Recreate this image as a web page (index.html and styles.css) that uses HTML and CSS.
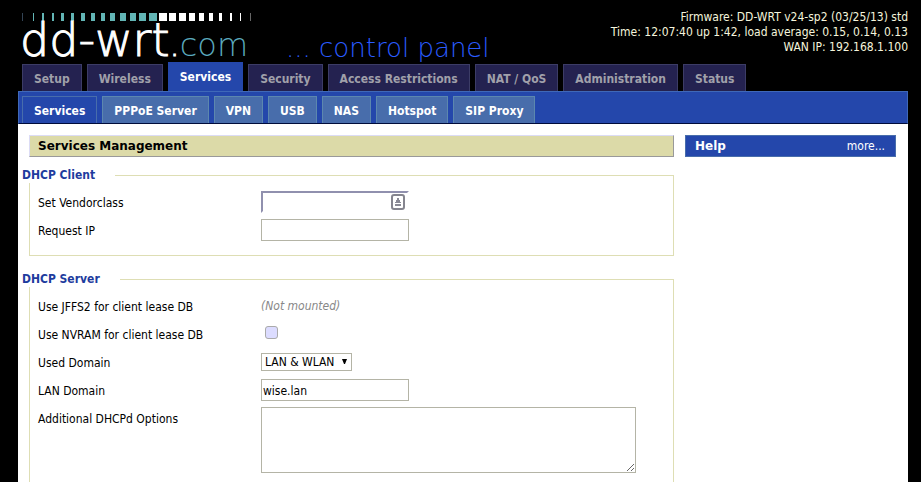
FILE: index.html
```html
<!DOCTYPE html>
<html lang="en">
<head>
<meta charset="utf-8">
<title>DD-WRT - Services</title>
<link rel="stylesheet" href="styles.css">
</head>
<body>
<div class="wrapper">
  <header class="header">
    <div class="brand">
      <div class="logo">
        <svg class="ticks" viewBox="0 0 232 10" aria-hidden="true">
          <g fill="#62b5b5">
            <path fill="#345" d="M0 1h1v8h-1z"/>
            <path d="M11 1h1v8h-1zM20 1h2v8h-2zM30 1h2v8h-2zM39 1h3v8h-3zM49 1h3v8h-3zM59 1h4v8h-4zM69 1h4v8h-4zM79 1h4v8h-4zM88 1h5v8h-5zM98 1h6v8h-6zM108 1h6v8h-6zM117 1h7v8h-7zM127 1h8v8h-8z"/>
          </g>
          <path fill="#fff" d="M137 1h8v8h-8zM147 1h7v8h-7zM157 1h7v8h-7zM167 1h6v8h-6zM177 1h5v8h-5zM187 1h4v8h-4zM197 1h3v8h-3zM208 1h2v8h-2zM218 1h1v8h-1z"/>
          <path fill="#666" d="M228 1h1v8h-1z"/>
        </svg>
        <div class="name">dd-wrt<span class="domain"><span class="dot">.</span>com</span></div>
      </div>
      <div class="tagline">... control panel</div>
    </div>
    <div class="info">
      <div>Firmware: DD-WRT v24-sp2 (03/25/13) std</div>
      <div>Time: 12:07:40 up 1:42, load average: 0.15, 0.14, 0.13</div>
      <div>WAN IP: 192.168.1.100</div>
    </div>
  </header>
  <nav class="tabs" aria-label="Main">
    <a href="#">Setup</a>
    <a href="#">Wireless</a>
    <a href="#" class="current">Services</a>
    <a href="#">Security</a>
    <a href="#">Access Restrictions</a>
    <a href="#">NAT / QoS</a>
    <a href="#">Administration</a>
    <a href="#">Status</a>
  </nav>
  <nav class="subtabs" aria-label="Services">
    <a href="#" class="current">Services</a>
    <a href="#">PPPoE Server</a>
    <a href="#">VPN</a>
    <a href="#">USB</a>
    <a href="#">NAS</a>
    <a href="#">Hotspot</a>
    <a href="#">SIP Proxy</a>
  </nav>
  <div class="content">
    <main class="main">
      <h2 class="title">Services Management</h2>
      <form class="form">
        <fieldset>
          <legend>DHCP Client</legend>
          <div class="row">
            <label for="vendorclass">Set Vendorclass</label>
            <div class="field">
              <input class="text focused" id="vendorclass" type="text">
              <svg class="autofill" viewBox="0 0 14 16" aria-hidden="true">
                <rect x="1" y="1" width="12" height="14" rx="2" fill="#fff" stroke="#85858f" stroke-width="2"/>
                <path fill="#8a8a96" d="M6 4h2v2h1v2h1v1h-6v-1h1v-2h1zM4 10h6v2h-6z"/>
              </svg>
            </div>
          </div>
          <div class="row">
            <label for="requestip">Request IP</label>
            <input class="text" id="requestip" type="text">
          </div>
        </fieldset>
        <fieldset class="open">
          <legend>DHCP Server</legend>
          <div class="row">
            <span class="label">Use JFFS2 for client lease DB</span>
            <em>(Not mounted)</em>
          </div>
          <div class="row">
            <label for="nvram">Use NVRAM for client lease DB</label>
            <input class="check" id="nvram" type="checkbox">
          </div>
          <div class="row">
            <label for="domain">Used Domain</label>
            <div class="field">
              <select id="domain"><option>LAN &amp; WLAN</option><option>WAN</option></select>
              <svg class="arrow" viewBox="0 0 6 6" aria-hidden="true"><path d="M0 0h5L3 5H2z"/></svg>
            </div>
          </div>
          <div class="row">
            <label for="landomain">LAN Domain</label>
            <input class="text" id="landomain" type="text" value="wise.lan">
          </div>
          <div class="row">
            <label for="options">Additional DHCPd Options</label>
            <textarea id="options"></textarea>
          </div>
        </fieldset>
      </form>
    </main>
    <aside class="help">
      <h2>Help</h2>
      <a href="#">more...</a>
    </aside>
  </div>
</div>
</body>
</html>
```
FILE: styles.css
```css
* { box-sizing: border-box; }

body {
  margin: 0;
  background: #000;
  color: #000;
  font: 12px/15px "DejaVu Sans Condensed", "DejaVu Sans", sans-serif;
}

a { text-decoration: none; }

.wrapper {
  display: flex;
  flex-direction: column;
  min-height: 100vh;
  margin: 0 13px 0 18px;
}

/* Header */
.header {
  display: flex;
  justify-content: space-between;
  height: 62px;
}

.brand {
  display: flex;
  align-items: flex-end;
  gap: 32px;
  padding-left: 2px;
  font-family: "DejaVu Sans Light", "DejaVu Sans", sans-serif;
  font-weight: 200;
  white-space: nowrap;
}

.logo {
  height: 62px;
  padding-top: 12px;
}

.ticks {
  display: block;
  width: 232px;
  height: 10px;
  margin-left: 2px;
}

.name {
  color: #fff;
  font-size: 46px;
  line-height: 37px;
  -webkit-text-stroke: 1px currentColor;
}

.domain {
  color: #5aa9bd;
  font-size: 32px;
  -webkit-text-stroke-width: 0;
}

.dot {
  color: #fff;
  -webkit-text-stroke: 1px #fff;
}

.tagline {
  color: #2a5cff;
  font-size: 26px;
  line-height: 28px;
}

.info {
  padding-top: 10px;
  color: #f5f5dc;
  text-align: right;
}

/* Navigation */
.tabs, .subtabs {
  display: flex;
  align-items: flex-end;
  gap: 5px;
  padding-left: 4px;
  font-weight: bold;
  white-space: nowrap;
}

.tabs a {
  padding: 7px 11px 4px;
  border: 1px solid #3c3c66;
  border-bottom: 0;
  background: #242250;
  color: #a0a0aa;
}

.tabs .current {
  padding-bottom: 6px;
  border-color: #2447ab;
  background: #2447ab;
  color: #fff;
}

.subtabs {
  padding-top: 4px;
  padding-left: 3px;
  border: 1px solid #3f68b8;
  border-bottom-color: #000c3a;
  background: #2447ab;
}

.subtabs a {
  padding: 7px 11px 4px;
  border: 1px solid #5c87ae;
  border-bottom: 0;
  background: #486dab;
  color: #fff;
}

.subtabs .current {
  border-color: #486dab;
  background: #2447ab;
}

/* Content */
.content {
  display: flex;
  flex: 1;
  gap: 11px;
  padding: 11px 12px 0 11px;
  background: #fff;
}

.main {
  display: flex;
  flex: 1;
  flex-direction: column;
}

.title, .help h2 {
  margin: 0;
  font: bold 12px/19px "DejaVu Sans", sans-serif;
}

.title {
  padding: 1px 8px 0;
  border: 1px solid #dcdcf5;
  border-right-color: #999;
  border-bottom-color: #999;
  background: #dcdaa8;
}

.form {
  display: flex;
  flex: 1;
  flex-direction: column;
  gap: 16px;
  padding-top: 11px;
}

fieldset {
  margin: 0;
  padding: 8px 8px 14px;
  border: 1px solid #dedeb4;
}

fieldset.open {
  flex: 1;
  padding-bottom: 0;
  border-bottom: 0;
}

legend {
  margin-left: -16px;
  padding: 0 20px 0 0;
  background: #fff;
  color: #1e3c9e;
  font-weight: bold;
}

.row {
  display: flex;
  align-items: center;
  min-height: 22px;
}

.row + .row { margin-top: 6px; }

.row label, .row .label {
  flex: none;
  align-self: flex-start;
  width: 223px;
  padding-top: 5px;
}

em { color: #888; }

.field { position: relative; }

.text, select, textarea {
  display: block;
  border: 1px solid #b4b4a6;
  background: #fff;
  color: #000;
  font: inherit;
}

.text {
  width: 148px;
  height: 22px;
  padding: 2px 1px 0;
}

.text.focused {
  border-width: 2px;
  border-color: #9090ae #fff #fff #9090ae;
}

.autofill {
  position: absolute;
  top: 3px;
  right: 4px;
  width: 14px;
  height: 16px;
}

.check {
  appearance: none;
  align-self: flex-start;
  width: 13px;
  height: 13px;
  margin: 3px 4px;
  border: 1px solid #aaa;
  border-radius: 3px;
  background: #dcdcff;
}

select {
  appearance: none;
  width: 91px;
  height: 18px;
  padding: 0 3px;
  border-radius: 0;
}

.arrow {
  position: absolute;
  top: 6px;
  right: 4px;
  width: 6px;
  height: 6px;
  pointer-events: none;
}

textarea {
  width: 375px;
  height: 66px;
  padding: 2px;
}

.help {
  display: flex;
  align-self: flex-start;
  justify-content: space-between;
  width: 211px;
  padding: 1px 10px 0 9px;
  border: 1px solid #486dab;
  background: #2447ab;
  color: #fff;
}

.help a {
  color: #fff;
  line-height: 19px;
}
```
